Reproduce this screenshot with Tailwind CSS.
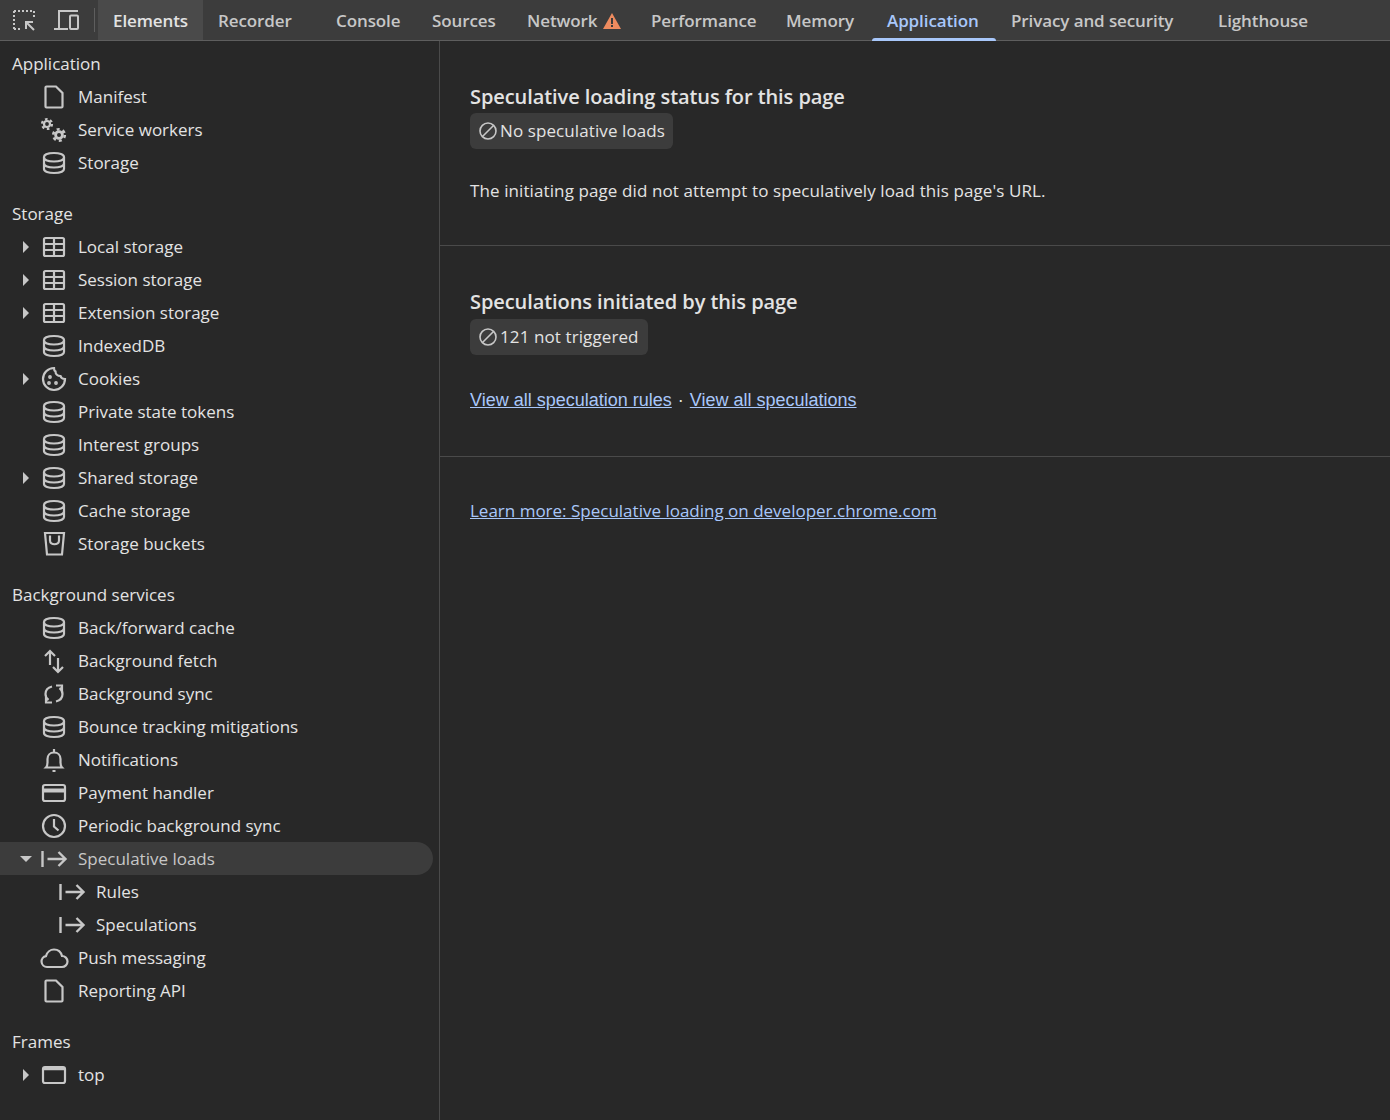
<!DOCTYPE html>
<html lang="en">
  <head>
    <meta charset="UTF-8" />
    <title>DevTools Application</title>
    <script src="https://cdn.jsdelivr.net/npm/@tailwindcss/browser@4"></script>
  </head>
  <body class="bg-[#282828] h-[1120px] w-[1390px] overflow-hidden font-['Open_Sans',sans-serif] text-[17px] text-[#e3e3e3]">
    <!-- shared icons -->
    <svg class="hidden">
      <defs>
        <symbol id="i-doc" viewBox="0 0 30 30"><path d="M7.500 4.500h9.500l6.500 6.500v13.500a1 1 0 0 1-1 1h-15a1 1 0 0 1-1-1v-19a1 1 0 0 1 1-1z" /></symbol>
        <symbol id="i-db" viewBox="0 0 30 30"><path d="M5 9c0-2.500 4.500-4 10-4s10 1.500 10 4v12c0 2.500-4.500 4-10 4S5 23.500 5 21z" /><path d="M5 9.500c0 2.500 4.500 4 10 4s10-1.500 10-4M5 15.500c0 2.500 4.500 4 10 4s10-1.500 10-4" /></symbol>
        <symbol id="i-table" viewBox="0 0 30 30"><rect x="5" y="6" width="20" height="18" rx="1.500" /><path d="M15 6v18M5 12h20M5 18h20" /></symbol>
        <symbol id="i-spec" viewBox="0 0 30 30"><path d="M3.500 7v16M8.500 15h17.500M19.500 8l7 7-7 7" stroke-width="2.400" /></symbol>
      </defs>
    </svg>

    <!-- toolbar -->
    <div class="flex h-[41px] items-stretch border-b border-[#5e5e5e] bg-[#3c3c3c] text-[#c7c7c7] font-semibold tracking-[-0.1px]">
      <div class="flex w-[94px] items-center">
        <svg class="ml-[12px] h-[24px] w-[24px]" viewBox="0 0 24 24" fill="none" stroke="#c7c7c7" stroke-width="2">
          <path d="M2 3h20M2 3v18M22 3v7M2 21h7" stroke-dasharray="2 2" />
          <path d="M14.500 14.500l7.500 7.500M14 21v-7h7" />
        </svg>
        <svg class="ml-[17px] h-[24px] w-[26px]" viewBox="0 0 26 24" fill="none" stroke="#c7c7c7" stroke-width="2">
          <path d="M25 3H6v17M1 21h14" />
          <rect x="17" y="7.500" width="8" height="13.500" rx="1" />
        </svg>
      </div>
      <div class="flex w-[4px] items-center"><div class="h-[24px] w-px bg-[#5e5e5e]"></div></div>
      <div class="flex w-[105px] items-center bg-[#4a4a4a] pl-[15px] pt-[2px] text-[#e3e3e3]">Elements</div>
      <div class="flex w-[118px] items-center pl-[15px] pt-[2px]">Recorder</div>
      <div class="flex w-[96px] items-center pl-[15px] pt-[2px]">Console</div>
      <div class="flex w-[95px] items-center pl-[15px] pt-[2px]">Sources</div>
      <div class="flex w-[124px] items-center pl-[15px] pt-[2px]">
        Network
        <svg class="ml-[6px] h-[16px] w-[18px]" viewBox="0 0 18 16"><path d="M9 0l9 16H0z" fill="#ee8b5f" /><path d="M8 5h2v6H8zM8 12h2v2H8z" fill="#3c3c3c" /></svg>
      </div>
      <div class="flex w-[135px] items-center pl-[15px] pt-[2px]">Performance</div>
      <div class="flex w-[101px] items-center pl-[15px] pt-[2px]">Memory</div>
      <div class="relative flex w-[124px] items-center pl-[15px] pt-[2px] text-[#a8c7fa]">
        Application
        <div class="absolute bottom-[-1px] left-0 h-[3px] w-full rounded-t-[3px] bg-[#a8c7fa]"></div>
      </div>
      <div class="flex w-[207px] items-center pl-[15px] pt-[2px]">Privacy and security</div>
      <div class="flex w-[120px] items-center pl-[15px] pt-[2px]">Lighthouse</div>
    </div>

    <div class="flex h-[1079px]">
      <!-- sidebar -->
      <nav class="w-[440px] shrink-0 border-r border-[#4a4a4a] pt-[6px] [&_svg]:fill-none [&_svg]:stroke-[#c7c7c7] [&_svg]:stroke-[2.2]">
        <div class="flex h-[33px] items-center pl-[12px]">Application</div>
        <div class="flex h-[33px] items-center pl-[39px]"><svg class="mr-[9px] h-[30px] w-[30px]"><use href="#i-doc" /></svg>Manifest</div>
        <div class="flex h-[33px] items-center pl-[39px]">
          <svg class="mr-[9px] h-[30px] w-[30px]" viewBox="0 0 30 30">
            <circle cx="8" cy="9" r="3" stroke-width="2.200" />
            <circle cx="8" cy="9" r="5" stroke-width="2.200" stroke-dasharray="2.600 2.630" />
            <circle cx="20" cy="20" r="3.400" stroke-width="2.800" />
            <circle cx="20" cy="20" r="5.800" stroke-width="2.600" stroke-dasharray="3 3.070" />
          </svg>
          Service workers
        </div>
        <div class="flex h-[33px] items-center pl-[39px]"><svg class="mr-[9px] h-[30px] w-[30px]"><use href="#i-db" /></svg>Storage</div>

        <div class="mt-[18px] flex h-[33px] items-center pl-[12px]">Storage</div>
        <div class="flex h-[33px] items-center pl-[23px]"><span class="mr-[10px] h-0 w-0 border-y-[6px] border-l-[6px] border-y-transparent border-l-[#c7c7c7]"></span><svg class="mr-[9px] h-[30px] w-[30px]"><use href="#i-table" /></svg>Local storage</div>
        <div class="flex h-[33px] items-center pl-[23px]"><span class="mr-[10px] h-0 w-0 border-y-[6px] border-l-[6px] border-y-transparent border-l-[#c7c7c7]"></span><svg class="mr-[9px] h-[30px] w-[30px]"><use href="#i-table" /></svg>Session storage</div>
        <div class="flex h-[33px] items-center pl-[23px]"><span class="mr-[10px] h-0 w-0 border-y-[6px] border-l-[6px] border-y-transparent border-l-[#c7c7c7]"></span><svg class="mr-[9px] h-[30px] w-[30px]"><use href="#i-table" /></svg>Extension storage</div>
        <div class="flex h-[33px] items-center pl-[39px]"><svg class="mr-[9px] h-[30px] w-[30px]"><use href="#i-db" /></svg>IndexedDB</div>
        <div class="flex h-[33px] items-center pl-[23px]">
          <span class="mr-[10px] h-0 w-0 border-y-[6px] border-l-[6px] border-y-transparent border-l-[#c7c7c7]"></span>
          <svg class="mr-[9px] h-[30px] w-[30px]" viewBox="0 0 30 30">
            <path d="M15 4a11 11 0 1 0 11 11c-2.500 0-4-1-4.500-3-3 0-5-2-5-4.500-1-.5-1.500-2-1.500-3.500z" />
            <circle cx="11" cy="13" r=".8" /><circle cx="10" cy="19" r=".8" /><circle cx="17" cy="19" r=".8" />
          </svg>
          Cookies
        </div>
        <div class="flex h-[33px] items-center pl-[39px]"><svg class="mr-[9px] h-[30px] w-[30px]"><use href="#i-db" /></svg>Private state tokens</div>
        <div class="flex h-[33px] items-center pl-[39px]"><svg class="mr-[9px] h-[30px] w-[30px]"><use href="#i-db" /></svg>Interest groups</div>
        <div class="flex h-[33px] items-center pl-[23px]"><span class="mr-[10px] h-0 w-0 border-y-[6px] border-l-[6px] border-y-transparent border-l-[#c7c7c7]"></span><svg class="mr-[9px] h-[30px] w-[30px]"><use href="#i-db" /></svg>Shared storage</div>
        <div class="flex h-[33px] items-center pl-[39px]"><svg class="mr-[9px] h-[30px] w-[30px]"><use href="#i-db" /></svg>Cache storage</div>
        <div class="flex h-[33px] items-center pl-[39px]">
          <svg class="mr-[9px] h-[30px] w-[30px]" viewBox="0 0 30 30"><path d="M6 4h19l-2 21.500H8zM11 6.500v5c0 5 9 5 9 0v-5" /></svg>
          Storage buckets
        </div>

        <div class="mt-[18px] flex h-[33px] items-center pl-[12px]">Background services</div>
        <div class="flex h-[33px] items-center pl-[39px]"><svg class="mr-[9px] h-[30px] w-[30px]"><use href="#i-db" /></svg>Back/forward cache</div>
        <div class="flex h-[33px] items-center pl-[39px]">
          <svg class="mr-[9px] h-[30px] w-[30px]" viewBox="0 0 30 30"><path d="M11 5v14M6 10l5-5 5 5M19 12v14M14 21l5 5 5-5" /></svg>
          Background fetch
        </div>
        <div class="flex h-[33px] items-center pl-[39px]">
          <svg class="mr-[9px] h-[30px] w-[30px]" viewBox="0 0 30 30"><path d="M13 7.500C9 8.500 6.500 11 6.500 15c0 2.500 1 4.500 3 6M7 17.500v6h6M17 22.500c4-1 6.500-3.500 6.500-7.500 0-2.500-1-4.500-3-6M23 12.500v-6h-6" /></svg>
          Background sync
        </div>
        <div class="flex h-[33px] items-center pl-[39px]"><svg class="mr-[9px] h-[30px] w-[30px]"><use href="#i-db" /></svg>Bounce tracking mitigations</div>
        <div class="flex h-[33px] items-center pl-[39px]">
          <svg class="mr-[9px] h-[30px] w-[30px]" viewBox="0 0 30 30"><path d="M7 22.500c1-1 1.500-2.500 1.500-5v-3.500c0-3.500 2.500-6.500 6.500-6.500s6.500 3 6.500 6.500v3.500c0 2.500.5 4 1.500 5zM15 4v3.500M13.500 26h3" /></svg>
          Notifications
        </div>
        <div class="flex h-[33px] items-center pl-[39px]">
          <svg class="mr-[9px] h-[30px] w-[30px]" viewBox="0 0 30 30"><rect x="4" y="7" width="22" height="16" rx="2" /><path d="M4 12.500h22" stroke-width="4" /></svg>
          Payment handler
        </div>
        <div class="flex h-[33px] items-center pl-[39px]">
          <svg class="mr-[9px] h-[30px] w-[30px]" viewBox="0 0 30 30"><circle cx="15" cy="15" r="11" /><path d="M15 8v7.500l4.500 4" /></svg>
          Periodic background sync
        </div>
        <div class="flex h-[33px] items-center rounded-r-full bg-[#3c3c3c] w-[433px] pl-[20px] text-[#c7c7c7]">
          <span class="mr-[7px] h-0 w-0 border-x-[6px] border-t-[6px] border-x-transparent border-t-[#c7c7c7]"></span><svg class="mr-[9px] h-[30px] w-[30px]"><use href="#i-spec" /></svg>Speculative loads
        </div>
        <div class="flex h-[33px] items-center pl-[57px]"><svg class="mr-[9px] h-[30px] w-[30px]"><use href="#i-spec" /></svg>Rules</div>
        <div class="flex h-[33px] items-center pl-[57px]"><svg class="mr-[9px] h-[30px] w-[30px]"><use href="#i-spec" /></svg>Speculations</div>
        <div class="flex h-[33px] items-center pl-[39px]">
          <svg class="mr-[9px] h-[30px] w-[30px]" viewBox="0 0 30 30"><path d="M8 24a5.500 5.500 0 0 1-1-10.900C8 9 11.500 6.500 15 6.500c4 0 7 2.500 8 6.500a5.500 5.500 0 0 1 0 11z" /></svg>
          Push messaging
        </div>
        <div class="flex h-[33px] items-center pl-[39px]"><svg class="mr-[9px] h-[30px] w-[30px]"><use href="#i-doc" /></svg>Reporting API</div>

        <div class="mt-[18px] flex h-[33px] items-center pl-[12px]">Frames</div>
        <div class="flex h-[33px] items-center pl-[23px]">
          <span class="mr-[10px] h-0 w-0 border-y-[6px] border-l-[6px] border-y-transparent border-l-[#c7c7c7]"></span>
          <svg class="mr-[9px] h-[30px] w-[30px]" viewBox="0 0 30 30"><rect x="4" y="7" width="22" height="16" rx="2" /><path d="M4 9h22" stroke-width="2.500" /></svg>
          top
        </div>
      </nav>

      <!-- main pane -->
      <main class="flex-1">
        <section class="border-b border-[#4a4a4a] pb-[42px] pl-[30px] pt-[41px]">
          <h2 class="h-[28px] text-[20px] leading-[30px] font-semibold tracking-[-0.08px]">Speculative loading status for this page</h2>
          <div class="mt-[3px] flex h-[36px] w-[203px] items-center rounded-[6px] bg-[#3c3c3c] pl-[9px] tracking-[0.1px]">
            <svg class="mr-[3px] h-[18px] w-[18px] shrink-0" viewBox="0 0 18 18" fill="none" stroke="#c7c7c7" stroke-width="1.600"><circle cx="9" cy="9" r="8" /><path d="M3.500 14.500l11-11" /></svg>
            No speculative loads
          </div>
          <p class="mt-[30px] h-[24px] leading-[24px] tracking-[0.1px]">The initiating page did not attempt to speculatively load this page's URL.</p>
        </section>
        <section class="border-b border-[#4a4a4a] pb-[45px] pl-[30px] pt-[41px]">
          <h2 class="h-[28px] text-[20px] leading-[30px] font-semibold tracking-[-0.08px]">Speculations initiated by this page</h2>
          <div class="mt-[4px] flex h-[36px] w-[178px] items-center rounded-[6px] bg-[#3c3c3c] pl-[9px] tracking-[0.1px]">
            <svg class="mr-[3px] h-[18px] w-[18px] shrink-0" viewBox="0 0 18 18" fill="none" stroke="#c7c7c7" stroke-width="1.600"><circle cx="9" cy="9" r="8" /><path d="M3.500 14.500l11-11" /></svg>
            121 not triggered
          </div>
          <div class="mt-[32px] flex h-[24px] items-center pt-[2px] font-['Liberation_Sans',sans-serif] text-[18px] leading-[24px]">
            <a href="#" class="text-[#a8c7fa] underline">View all speculation rules</a>
            <span class="mx-[6px]">·</span>
            <a href="#" class="text-[#a8c7fa] underline">View all speculations</a>
          </div>
        </section>
        <section class="pl-[30px] pt-[41px]">
          <a href="#" class="leading-[24px] text-[#a8c7fa] underline">Learn more: Speculative loading on developer.chrome.com</a>
        </section>
      </main>
    </div>
  </body>
</html>
